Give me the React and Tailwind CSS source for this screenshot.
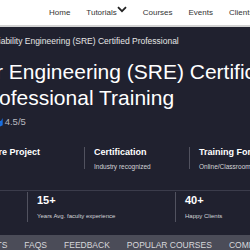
import React from "react";

const navItems = ["Home", "Tutorials", "Courses", "Events", "Clients", "Blog"];

const highlights = [
  { title: "Future Project", sub: "" },
  { title: "Certification", sub: "Industry recognized" },
  { title: "Training Format", sub: "Online/Classroom/Corporate" },
];

const stats = [
  { value: "8000+", label: "Certified Learners" },
  { value: "15+", label: "Years Avg. faculty experience" },
  { value: "40+", label: "Happy Clients" },
];

const tabs = ["Projects", "FAQs", "Feedback", "Popular Courses", "Compare"];

const Star = ({ half }) => (
  <svg
    viewBox={half ? "0 0 12.4 24" : "0 0 24 24"}
    className={half ? "w-[5.7px] h-[11px] shrink-0" : "w-[11px] h-[11px] shrink-0"}
    fill="#1a6fe0"
  >
    {half ? (
      <polygon points="12.4,2 12.4,17.77 5.82,21.02 7,14.14 2,9.27 8.91,8.26" />
    ) : (
      <polygon points="12,2 15.09,8.26 22,9.27 17,14.14 18.18,21.02 12,17.77 5.82,21.02 7,14.14 2,9.27 8.91,8.26" />
    )}
  </svg>
);

const App = () => {
  return (
    <div className="w-[250px] h-[250px] overflow-hidden bg-[#20212f] font-['Liberation_Sans',Arial,sans-serif]">
      {/* top nav */}
      <header className="h-[27px] bg-white border-b-2 border-[#d2d2d2] flex items-center">
        <nav className="flex items-center gap-[16px] pl-[49px] text-[8px] text-[#333] whitespace-nowrap">
          {navItems.map((item) =>
            item === "Tutorials" ? (
              <span key={item} className="flex items-center">
                {item}
                <svg
                  viewBox="0 0 10 7"
                  className="w-[10px] h-[7px] -mt-[6px]"
                  fill="none"
                  stroke="#222"
                  strokeWidth="1.8"
                >
                  <path d="M1 1.2 L5 5.2 L9 1.2" />
                </svg>
              </span>
            ) : (
              <span key={item}>{item}</span>
            )
          )}
        </nav>
      </header>

      {/* hero */}
      <section className="text-white whitespace-nowrap">
        <p className="mt-[9px] -ml-[31px] text-[8.5px] leading-[10px] text-[#e6e6e6]">
          Site Reliability Engineering (SRE) Certified Professional
        </p>

        <h1 className="mt-[13px] -ml-[22px] w-[380px] whitespace-normal indent-[4px] text-[21px] leading-[26px] text-white">
          Sr Engineering (SRE) Certification &amp; Professional Training
        </h1>

        <div className="mt-[6px] -ml-[51px] flex items-center gap-[1px] h-[10px]">
          <Star />
          <Star />
          <Star />
          <Star />
          <Star half />
          <span className="ml-[1px] text-[9.5px] leading-[10px] text-[#b9b9c0]">
            4.5/5
          </span>
        </div>

        {/* highlights */}
        <div className="mt-[20px] -ml-[21px] flex">
          {highlights.map((h, i) => (
            <div
              key={h.title}
              className={
                i === 0
                  ? "w-[105px] shrink-0 h-[22px]"
                  : "w-[105px] shrink-0 h-[22px] border-l border-[#51525f] pl-[9px]"
              }
            >
              <p className="text-[9px] leading-[10px] font-bold">{h.title}</p>
              {h.sub && (
                <p className="mt-[6px] text-[6.5px] leading-[8px] text-[#d4d4d8]">
                  {h.sub}
                </p>
              )}
            </div>
          ))}
        </div>

        {/* stats */}
        <div className="mt-[21px] border-t border-[#3b3c4b]">
          <div className="mt-[1px] -ml-[121px] flex">
            {stats.map((s) => (
              <div
                key={s.value}
                className="w-[148px] shrink-0 h-[30px] border-l border-[#51525f] pl-[9px] pt-[2px]"
              >
                <p className="text-[11px] leading-[12px] font-bold">{s.value}</p>
                <p className="mt-[6px] text-[6px] leading-[8px] text-[#d4d4d8]">
                  {s.label}
                </p>
              </div>
            ))}
          </div>
        </div>
      </section>

      {/* tabs */}
      <div className="mt-[13px] h-[20px] bg-[#4b4c58] pt-[5px]">
        <ul className="-ml-[38px] flex gap-[17px] text-[8.5px] leading-[10px] uppercase text-[#d8d8dc] whitespace-nowrap">
          {tabs.map((t) => (
            <li key={t}>{t}</li>
          ))}
        </ul>
      </div>
    </div>
  );
};

export default App;
